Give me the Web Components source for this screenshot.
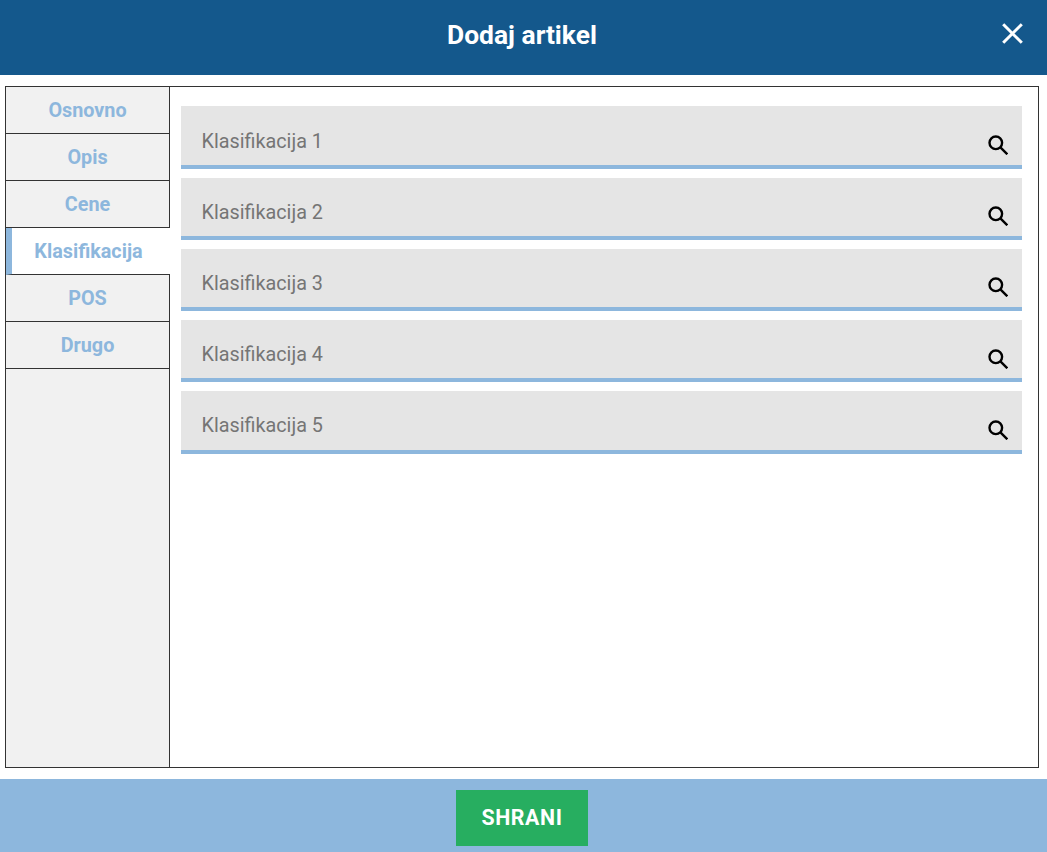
<!DOCTYPE html>
<html>
<head>
<meta charset="utf-8">
<title>Dodaj artikel</title>
<style>
html, body { margin: 0; height: 100%; }
body { font-family: Roboto, "Liberation Sans", sans-serif; background: white; }
</style>
</head>
<body>
<article-dialog title-text="Dodaj artikel">
    <tab-item>Osnovno</tab-item>
    <tab-item>Opis</tab-item>
    <tab-item>Cene</tab-item>
    <tab-item active>Klasifikacija</tab-item>
    <tab-item>POS</tab-item>
    <tab-item>Drugo</tab-item>
    <search-field slot="content" label="Klasifikacija 1"></search-field>
    <search-field slot="content" label="Klasifikacija 2"></search-field>
    <search-field slot="content" label="Klasifikacija 3"></search-field>
    <search-field slot="content" label="Klasifikacija 4"></search-field>
    <search-field slot="content" label="Klasifikacija 5"></search-field>
</article-dialog>

<script>
const dialogTemplate = document.createElement("template")
dialogTemplate.innerHTML = `
<style>
:host {
    display: flex;
    flex-direction: column;
    height: 852px;
    box-sizing: border-box;
}
header {
    position: relative;
    display: flex;
    align-items: center;
    justify-content: center;
    flex: 0 0 75px;
    box-sizing: border-box;
    padding: 0 3px 5px 0;
    background-color: #14588c;
    color: white;
    font-size: 26.4px;
    font-weight: 700;
}
.close {
    position: absolute;
    top: 23px;
    right: 24px;
    width: 21px;
    height: 21px;
}
.frame {
    flex: 1;
    display: flex;
    margin: 11px 8px 11px 5px;
    border: 1px solid #333;
    min-height: 0;
}
nav {
    flex: 0 0 163px;
    border-right: 1px solid #333;
    background-color: #f1f1f1;
}
main {
    flex: 1;
    padding: 19.4px 16px 0 11px;
    display: flex;
    flex-direction: column;
    gap: 8.8px;
}
footer {
    flex: 0 0 73px;
    display: flex;
    justify-content: center;
    padding: 11px 3px 0 0;
    box-sizing: border-box;
    background-color: #8db7dd;
}
button {
    width: 132px;
    height: 56px;
    border: 0;
    padding: 0 0 1px;
    background-color: #27ae60;
    color: white;
    font-family: inherit;
    font-size: 21.33px;
    font-weight: 700;
    letter-spacing: 0.6px;
}
</style>
<header>
    <span id="title"></span>
    <svg class="close" viewBox="0 0 21 21" fill="none" stroke="white" stroke-width="3">
        <path d="M1.2 1.2L19.8 19.8M19.8 1.2L1.2 19.8"/>
    </svg>
</header>
<div class="frame">
    <nav><slot></slot></nav>
    <main><slot name="content"></slot></main>
</div>
<footer><button>SHRANI</button></footer>
`
class ArticleDialog extends HTMLElement {
    constructor() {
        super();
        const shadow = this.attachShadow({ mode: "open" })
        shadow.append(dialogTemplate.content.cloneNode(true))
        shadow.querySelector("#title").textContent = this.getAttribute("title-text")
    }
}

const tabTemplate = document.createElement("template")
tabTemplate.innerHTML = `
<style>
:host {
    display: flex;
    align-items: center;
    justify-content: center;
    position: relative;
    box-sizing: border-box;
    height: 47px;
    border-bottom: 1px solid #333;
    color: #8db7dd;
    font-size: 19.8px;
    font-weight: 700;
}
:host([active]) {
    background-color: white;
    margin-right: -1px;
    border-left: 6px solid #8db7dd;
    padding-right: 5px;
}
</style>
<slot></slot>
`
class TabItem extends HTMLElement {
    constructor() {
        super();
        const shadow = this.attachShadow({ mode: "open" })
        shadow.append(tabTemplate.content.cloneNode(true))
    }
}

const fieldTemplate = document.createElement("template")
fieldTemplate.innerHTML = `
<style>
:host {
    display: flex;
    align-items: center;
    position: relative;
    box-sizing: border-box;
    height: 62.4px;
    padding: 11px 0 0 20.5px;
    background-color: #e5e5e5;
    border-bottom: 4px solid #8db7dd;
    color: #757575;
    font-size: 19.8px;
}
svg {
    position: absolute;
    right: 14px;
    top: 28.6px;
    width: 20px;
    height: 20px;
}
</style>
<span id="label"></span>
<svg viewBox="0 0 20 20" fill="none" stroke="black" stroke-width="2.4">
    <circle cx="7.8" cy="7.8" r="6.3"/>
    <path d="M12.4 12.4L19.3 19.3"/>
</svg>
`
class SearchField extends HTMLElement {
    constructor() {
        super();
        const shadow = this.attachShadow({ mode: "open" })
        shadow.append(fieldTemplate.content.cloneNode(true))
        shadow.querySelector("#label").textContent = this.getAttribute("label")
    }
}

customElements.define("article-dialog", ArticleDialog)
customElements.define("tab-item", TabItem)
customElements.define("search-field", SearchField)
</script>
</body>
</html>
